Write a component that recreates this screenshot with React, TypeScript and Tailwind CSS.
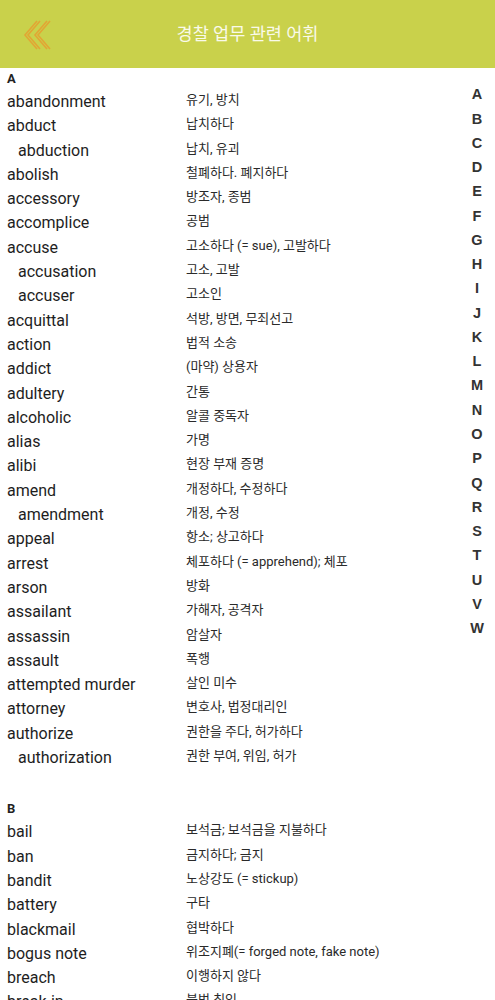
import React from "react";

type Row = { en: string; ko: string; sub?: boolean };

const sectionA: Row[] = [
  { en: "abandonment", ko: "유기, 방치" },
  { en: "abduct", ko: "납치하다" },
  { en: "abduction", ko: "납치, 유괴", sub: true },
  { en: "abolish", ko: "철폐하다. 폐지하다" },
  { en: "accessory", ko: "방조자, 종범" },
  { en: "accomplice", ko: "공범" },
  { en: "accuse", ko: "고소하다 (= sue), 고발하다" },
  { en: "accusation", ko: "고소, 고발", sub: true },
  { en: "accuser", ko: "고소인", sub: true },
  { en: "acquittal", ko: "석방, 방면, 무죄선고" },
  { en: "action", ko: "법적 소송" },
  { en: "addict", ko: "(마약) 상용자" },
  { en: "adultery", ko: "간통" },
  { en: "alcoholic", ko: "알콜 중독자" },
  { en: "alias", ko: "가명" },
  { en: "alibi", ko: "현장 부재 증명" },
  { en: "amend", ko: "개정하다, 수정하다" },
  { en: "amendment", ko: "개정, 수정", sub: true },
  { en: "appeal", ko: "항소; 상고하다" },
  { en: "arrest", ko: "체포하다 (= apprehend); 체포" },
  { en: "arson", ko: "방화" },
  { en: "assailant", ko: "가해자, 공격자" },
  { en: "assassin", ko: "암살자" },
  { en: "assault", ko: "폭행" },
  { en: "attempted murder", ko: "살인 미수" },
  { en: "attorney", ko: "변호사, 법정대리인" },
  { en: "authorize", ko: "권한을 주다, 허가하다" },
  { en: "authorization", ko: "권한 부여, 위임, 허가", sub: true },
];

const sectionB: Row[] = [
  { en: "bail", ko: "보석금; 보석금을 지불하다" },
  { en: "ban", ko: "금지하다; 금지" },
  { en: "bandit", ko: "노상강도 (= stickup)" },
  { en: "battery", ko: "구타" },
  { en: "blackmail", ko: "협박하다" },
  { en: "bogus note", ko: "위조지폐(= forged note, fake note)" },
  { en: "breach", ko: "이행하지 않다" },
  { en: "break-in", ko: "불법 침입" },
];

const letters = "ABCDEFGHIJKLMNOPQRSTUVW".split("");

function Section({ title, rows }: { title: string; rows: Row[] }) {
  return (
    <div className="mb-[29px]">
      <div className="h-[21px] flex items-center pl-[7px] text-[13px] font-bold text-[#222]">
        {title}
      </div>
      {rows.map((r) => (
        <div key={r.en} className="h-[24.3px] flex items-start pt-[3px]">
          <div
            className={`w-[186px] shrink-0 text-[16px] leading-[19px] text-[#1e1e1e] whitespace-nowrap ${
              r.sub ? "pl-[18px]" : "pl-[7px]"
            }`}
          >
            {r.en}
          </div>
          <div className="text-[13px] leading-[15px] text-[#2a2a2a] whitespace-nowrap">
            {r.ko}
          </div>
        </div>
      ))}
    </div>
  );
}

export default function App() {
  return (
    <div
      className="w-[495px] h-[1000px] overflow-hidden bg-white"
      style={{ fontFamily: 'Roboto, "Noto Sans CJK KR", sans-serif' }}
    >
      <header className="h-[68px] bg-[#c9d14b] flex items-center relative">
        <div className="w-[70px] flex items-center justify-center pl-[3px] pt-[2px]">
          <svg width="28" height="34" viewBox="0 0 28 34" fill="none">
            <path d="M14 3 L2 17 L14 31" stroke="#e2a534" strokeWidth="1.6" />
            <path d="M17 3 L5 17 L17 31" stroke="#e2a534" strokeWidth="1.6" />
            <path d="M24 3 L12 17 L24 31" stroke="#e2a534" strokeWidth="1.6" />
            <path d="M27 3 L15 17 L27 31" stroke="#e2a534" strokeWidth="1.6" />
          </svg>
        </div>
        <div className="absolute left-0 right-0 text-center text-[17.5px] text-[#f9faea] pointer-events-none">
          경찰 업무 관련 어휘
        </div>
      </header>
      <div className="flex">
        <div className="flex-1">
          <Section title="A" rows={sectionA} />
          <Section title="B" rows={sectionB} />
        </div>
        <div className="w-[36px] shrink-0 pt-[15px] flex flex-col items-center">
          {letters.map((l) => (
            <div
              key={l}
              className="h-[24.27px] flex items-center text-[14.5px] font-bold text-[#333]"
              style={{ fontFamily: '"Liberation Sans", Arial, sans-serif' }}
            >
              {l}
            </div>
          ))}
        </div>
      </div>
    </div>
  );
}
